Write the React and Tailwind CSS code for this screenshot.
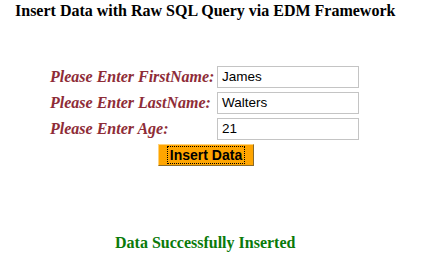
export default function App() {
  const rows = [
    ["Please Enter FirstName:", "James"],
    ["Please Enter LastName:", "Walters"],
    ["Please Enter Age:", "21"],
  ];
  return (
    <div className="w-[428px] h-[259px] bg-white overflow-hidden relative" style={{ fontFamily: '"Liberation Serif", serif' }}>
      <div className="pl-[15px] pt-[2px] text-[16px] font-bold leading-[18px] text-black">
        Insert Data with Raw SQL Query via EDM Framework
      </div>
      <div className="mt-[46px] pl-[50px] flex flex-col gap-[4px]">
        {rows.map(([label, val]) => (
          <div key={label} className="flex items-center h-[22px]">
            <div className="w-[167px] text-[16px] font-bold italic text-[#8e2c37] leading-[18px] whitespace-nowrap">
              {label}
            </div>
            <div className="w-[142px] h-[22px] border border-[#c4c4c4] bg-white flex items-center px-[4px] text-[13.5px] text-black" style={{ fontFamily: '"Liberation Sans", Arial, sans-serif' }}>
              {val}
            </div>
          </div>
        ))}
        <div className="pl-[108px]">
          <button className="w-[96px] h-[22px] bg-[#ffa500] border border-t-[#ffd27a] border-l-[#ffd27a] border-r-[#8a6a2a] border-b-[#8a6a2a] flex items-center justify-center p-0" style={{ fontFamily: '"Liberation Sans", Arial, sans-serif' }}>
            <span className="text-[14px] font-bold text-black leading-[16px] px-[2px] outline outline-1 outline-dotted outline-black">Insert Data</span>
          </button>
        </div>
      </div>
      <div className="mt-[68px] pl-[115px] text-[16px] font-bold leading-[18px] text-[#0a7a0a]">
        Data Successfully Inserted
      </div>
    </div>
  );
}
